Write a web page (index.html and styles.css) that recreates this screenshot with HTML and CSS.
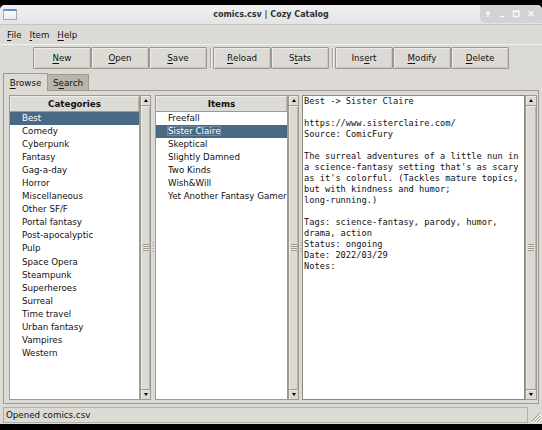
FILE: index.html
```html
<!DOCTYPE html>
<html lang="en">
<head>
<meta charset="utf-8">
<title>comics.csv | Cozy Catalog</title>
<link rel="stylesheet" href="styles.css">
</head>
<body>
<div class="window">
  <div class="titlebar">
    <span class="win-icon"></span>
    <span class="title">comics.csv | Cozy Catalog</span>
    <div class="controls">
      <svg width="62" height="18" viewBox="0 0 62 18">
        <g fill="#f8f8f8" stroke="none">
          <polygon points="8,5.5 11,9 5,9"/>
          <rect x="7.2" y="9" width="1.6" height="3"/>
        </g>
        <g stroke="#f8f8f8" stroke-width="1.4" fill="none">
          <line x1="19.5" y1="11.5" x2="24.5" y2="11.5"/>
          <rect x="33.5" y="6" width="5.5" height="5.5"/>
          <line x1="48.5" y1="6" x2="53.5" y2="11"/>
          <line x1="53.5" y1="6" x2="48.5" y2="11"/>
        </g>
        <line x1="33.5" y1="6.5" x2="39" y2="6.5" stroke="#f8f8f8" stroke-width="1.6"/>
      </svg>
    </div>
  </div>

  <div class="menubar">
    <span class="menu"><u>F</u>ile</span>
    <span class="menu"><u>I</u>tem</span>
    <span class="menu"><u>H</u>elp</span>
  </div>

  <div class="toolbar">
    <button class="btn"><u>N</u>ew</button>
    <button class="btn"><u>O</u>pen</button>
    <button class="btn"><u>S</u>ave</button>
    <span class="sep"></span>
    <button class="btn"><u>R</u>eload</button>
    <button class="btn">S<u>t</u>ats</button>
    <span class="sep"></span>
    <button class="btn">Ins<u>e</u>rt</button>
    <button class="btn"><u>M</u>odify</button>
    <button class="btn"><u>D</u>elete</button>
  </div>

  <div class="tabs">
    <div class="tab tab-active"><u>B</u>rowse</div>
    <div class="tab tab-idle">S<u>e</u>arch</div>
  </div>

  <div class="notebook">
    <div class="tree tree-cat">
      <div class="heading">Categories</div>
      <ul class="rows">
        <li class="row selected">Best</li>
        <li class="row">Comedy</li>
        <li class="row">Cyberpunk</li>
        <li class="row">Fantasy</li>
        <li class="row">Gag-a-day</li>
        <li class="row">Horror</li>
        <li class="row">Miscellaneous</li>
        <li class="row">Other SF/F</li>
        <li class="row">Portal fantasy</li>
        <li class="row">Post-apocalyptic</li>
        <li class="row">Pulp</li>
        <li class="row">Space Opera</li>
        <li class="row">Steampunk</li>
        <li class="row">Superheroes</li>
        <li class="row">Surreal</li>
        <li class="row">Time travel</li>
        <li class="row">Urban fantasy</li>
        <li class="row">Vampires</li>
        <li class="row">Western</li>
      </ul>
    </div>
    <div class="scrollbar">
      <span class="arrow arrow-up"></span>
      <span class="thumb"><span class="grip"></span></span>
      <span class="arrow arrow-down"></span>
    </div>
    <div class="sash"><span class="sash-grip"></span></div>

    <div class="tree tree-items">
      <div class="heading">Items</div>
      <ul class="rows">
        <li class="row">Freefall</li>
        <li class="row selected"><span class="focus">Sister Claire</span></li>
        <li class="row">Skeptical</li>
        <li class="row">Slightly Damned</li>
        <li class="row">Two Kinds</li>
        <li class="row">Wish&amp;Will</li>
        <li class="row">Yet Another Fantasy Gamer</li>
      </ul>
    </div>
    <div class="scrollbar">
      <span class="arrow arrow-up"></span>
      <span class="thumb"><span class="grip"></span></span>
      <span class="arrow arrow-down"></span>
    </div>
    <div class="sash"><span class="sash-grip"></span></div>

    <pre class="textview">Best -&gt; Sister Claire

https://www.sisterclaire.com/
Source: ComicFury

The surreal adventures of a little nun in
a science-fantasy setting that's as scary
as it's colorful. (Tackles mature topics,
but with kindness and humor;
long-running.)

Tags: science-fantasy, parody, humor,
drama, action
Status: ongoing
Date: 2022/03/29
Notes:</pre>
    <div class="scrollbar scrollbar-wide">
      <span class="arrow arrow-up"></span>
      <span class="thumb"><span class="grip"></span></span>
      <span class="arrow arrow-down"></span>
    </div>
  </div>

  <div class="statusrow">
    <div class="status">Opened comics.csv</div>
    <div class="sizegrip">
      <svg width="12" height="12" viewBox="0 0 12 12">
        <g stroke="#9e9a91" stroke-width="1">
          <line x1="11" y1="2" x2="2" y2="11"/>
          <line x1="11" y1="5" x2="5" y2="11"/>
          <line x1="11" y1="8" x2="8" y2="11"/>
        </g>
        <g stroke="#ffffff" stroke-width="1">
          <line x1="12" y1="3" x2="3" y2="12"/>
          <line x1="12" y1="6" x2="6" y2="12"/>
          <line x1="12" y1="9" x2="9" y2="12"/>
        </g>
      </svg>
    </div>
  </div>
</div>
</body>
</html>
```

FILE: styles.css
```css
* {
  box-sizing: border-box;
  margin: 0;
  padding: 0;
}

html, body {
  width: 542px;
  height: 430px;
  background: #000;
  overflow: hidden;
}

body {
  font-family: "DejaVu Sans", "Liberation Sans", sans-serif;
  font-size: 8.7px;
  color: #111;
}

u {
  text-decoration: underline;
  text-underline-offset: 1.5px;
  text-decoration-thickness: 1px;
}

.window {
  margin-top: 5px;
  height: 419px;
  background: #dcdad5;
  border-radius: 5px 5px 0 0;
  overflow: hidden;
  display: flex;
  flex-direction: column;
}

/* Title bar */
.titlebar {
  height: 20px;
  flex: none;
  background: linear-gradient(#f0f0f0, #e4e4e4);
  border-bottom: 1px solid #c4c4c4;
  display: grid;
  grid-template-columns: 1fr auto 1fr;
  align-items: center;
}

.win-icon {
  justify-self: start;
  margin-left: 3px;
  width: 14px;
  height: 11px;
  border: 1px solid #a8a8a8;
  border-top: 2px solid #5a8fd0;
  background: linear-gradient(#ffffff, #e8e8e8);
  border-radius: 1px;
}

.title {
  font-weight: bold;
  font-size: 8px;
  color: #2e3436;
}

.controls {
  justify-self: end;
  align-self: start;
  width: 62px;
  height: 18px;
  background: #d2d2d2;
  border-bottom-left-radius: 6px;
  display: flex;
}

/* Menu bar */
.menubar {
  height: 20px;
  flex: none;
  display: flex;
  align-items: center;
  padding-left: 3px;
  border-bottom: 1px solid #f1efeb;
}

.menu {
  padding: 0 4px;
}

/* Toolbar */
.toolbar {
  height: 26px;
  flex: none;
  display: flex;
  justify-content: center;
  align-items: flex-start;
  padding-top: 2px;
}

.btn {
  width: 58px;
  height: 22px;
  font: inherit;
  color: #111;
  background: #dcdad5;
  border: 1px solid #9e9a91;
  box-shadow: inset 1px 1px 0 #eeebe7, inset -1px -1px 0 #cbc7bf;
  border-radius: 1px;
  display: flex;
  align-items: center;
  justify-content: center;
}

.sep {
  width: 6px;
  height: 20px;
  margin-top: 1px;
  display: flex;
  justify-content: center;
}

.sep::before {
  content: "";
  width: 1px;
  height: 100%;
  background: #aaa69e;
  box-shadow: 1px 0 0 #f4f2ee;
}

/* Tabs */
.tabs {
  height: 18px;
  flex: none;
  margin-top: 1px;
  padding-left: 3px;
  display: flex;
  align-items: flex-end;
}

.tab {
  display: flex;
  align-items: center;
  justify-content: center;
  border: 1px solid #9e9a91;
  border-bottom: none;
  border-radius: 1px 1px 0 0;
}

.tab-active {
  width: 45px;
  height: 18px;
  background: #dcdad5;
  position: relative;
  z-index: 1;
  margin-bottom: -1px;
  padding-top: 1px;
}

.tab-idle {
  width: 41px;
  height: 16px;
  background: #bab5ab;
  border-left: none;
  padding-top: 1px;
}

/* Notebook panel */
.notebook {
  height: 314px;
  flex: none;
  margin: 0 3px;
  border: 1px solid #9e9a91;
  padding: 4px 1px 3px 5px;
  display: grid;
  grid-template-columns: 131px 11px 4px 133px 11px 3px 223px 12px;
}

.tree {
  background: #fff;
  border: 1px solid #9e9a91;
  overflow: hidden;
  display: flex;
  flex-direction: column;
}

.heading {
  height: 16px;
  flex: none;
  background: #dcdad5;
  border-bottom: 1px solid #9e9a91;
  box-shadow: inset 1px 1px 0 #eeebe7, inset -1px 0 0 #bab5ab;
  font-weight: bold;
  display: flex;
  align-items: center;
  justify-content: center;
}

.rows {
  list-style: none;
}

.row {
  height: 13.06px;
  line-height: 13.06px;
  padding-left: 12px;
  white-space: nowrap;
}

.row.selected {
  background: #4a6984;
  color: #fff;
}

.focus {
  outline: 1px solid rgba(200, 214, 228, 0.3);
  outline-offset: -1px;
  padding: 0 1px;
  margin-left: -1px;
}

/* Scrollbars */
.scrollbar {
  border: 1px solid #9e9a91;
  background: #dcdad5;
  display: flex;
  flex-direction: column;
}

.arrow {
  height: 10px;
  flex: none;
  display: flex;
  align-items: center;
  justify-content: center;
  box-shadow: inset 1px 1px 0 #eeebe7;
}

.arrow-up {
  border-bottom: 1px solid #9e9a91;
}

.arrow-down {
  border-top: 1px solid #9e9a91;
}

.arrow::before {
  content: "";
  width: 0;
  height: 0;
  border-left: 2.5px solid transparent;
  border-right: 2.5px solid transparent;
}

.arrow-up::before {
  border-bottom: 3px solid #000;
}

.arrow-down::before {
  border-top: 3px solid #000;
}

.thumb {
  flex: 1;
  display: flex;
  align-items: center;
  justify-content: center;
  box-shadow: inset 1px 1px 0 #eeebe7, inset -1px 0 0 #bab5ab;
}

.grip {
  width: 6px;
  height: 7px;
  background: repeating-linear-gradient(#9e9a91 0 1px, #eeebe7 1px 2px);
}

.sash {
  display: flex;
  align-items: center;
  justify-content: center;
}

.sash-grip {
  width: 2px;
  height: 12px;
  background: repeating-linear-gradient(#b9b5ad 0 1px, transparent 1px 3px);
}

/* Text view */
.textview {
  background: #fff;
  border: 1px solid #8e8a82;
  font-family: "DejaVu Sans Mono", "Liberation Mono", monospace;
  font-size: 8.7px;
  line-height: 11px;
  padding: 0 1px;
  color: #111;
  overflow: hidden;
  white-space: pre;
}

/* Status bar */
.statusrow {
  height: 16px;
  flex: none;
  margin-top: 3px;
  display: flex;
}

.status {
  flex: 1;
  margin-left: 3px;
  border: 1px solid #b3afa7;
  padding-left: 2px;
  display: flex;
  align-items: center;
}

.sizegrip {
  width: 14px;
  display: flex;
  align-items: flex-end;
  justify-content: flex-end;
  padding: 0 1px 0 0;
}
```
